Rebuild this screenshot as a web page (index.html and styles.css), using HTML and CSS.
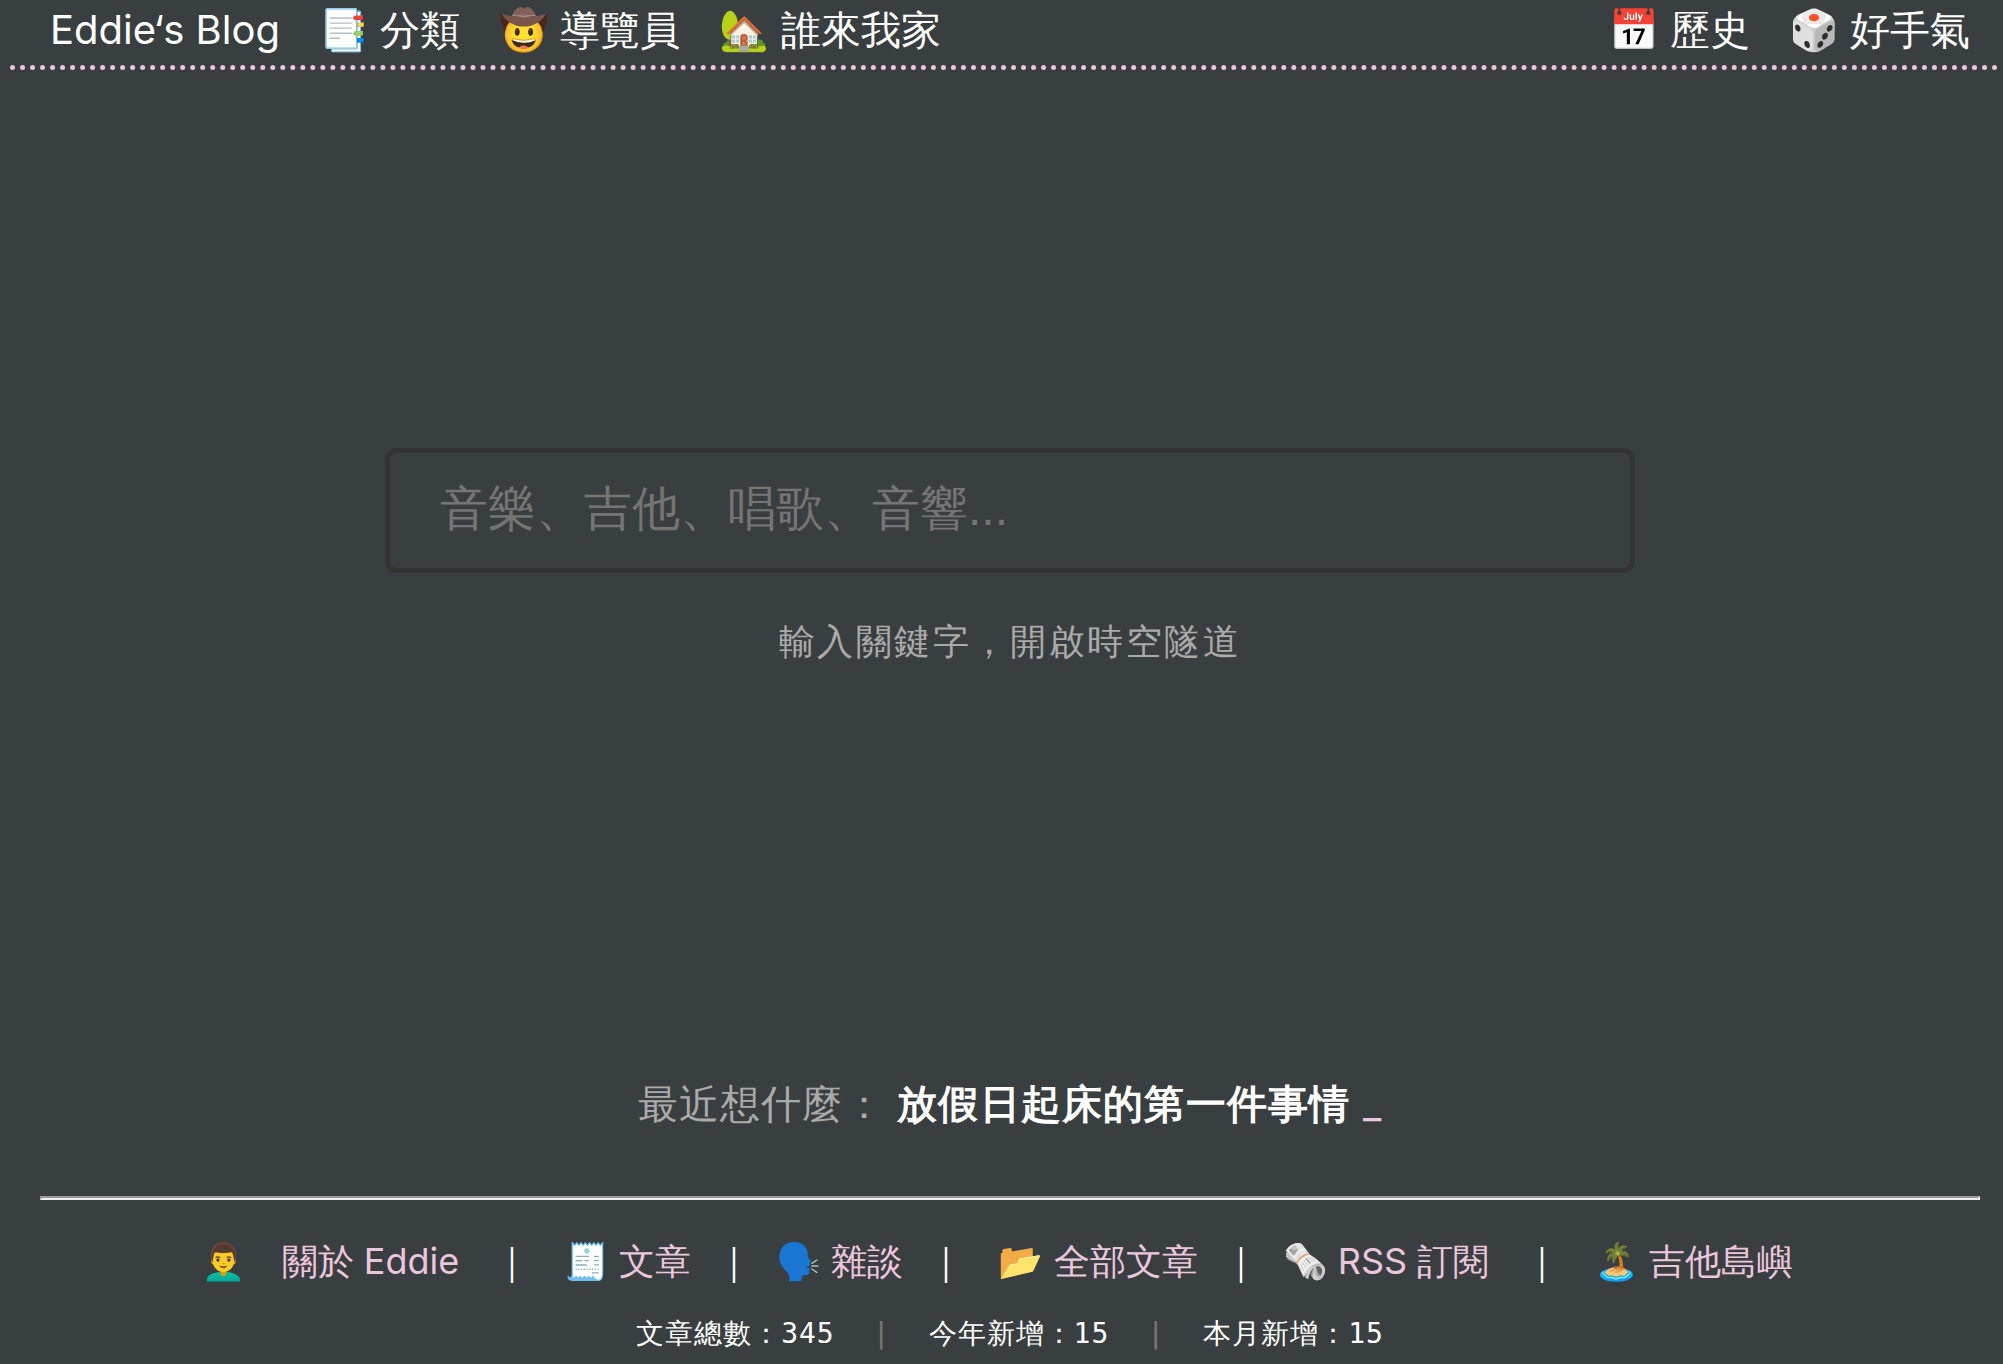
FILE: index.html
```html
<!DOCTYPE html>
<html lang="zh-Hant">
<head>
<meta charset="utf-8">
<title>Eddie‘s Blog</title>
<link rel="stylesheet" href="styles.css">
</head>
<body>
<header class="top">
  <nav class="nav">
    <a href="#">Eddie‘s Blog</a>
    <a href="#">📑 分類</a>
    <a href="#">🤠 導覽員</a>
    <a href="#">🏡 誰來我家</a>
  </nav>
  <nav class="nav">
    <a href="#">📅 歷史</a>
    <a href="#">🎲 好手氣</a>
  </nav>
</header>
<main class="main">
  <form class="search">
    <input class="search-box" id="q" type="search" placeholder="音樂、吉他、唱歌、音響...">
    <label class="hint" for="q">輸入關鍵字，開啟時空隧道</label>
  </form>
  <p class="recent">最近想什麼： <a href="#">放假日起床的第一件事情</a> <span class="cursor">_</span></p>
</main>
<footer class="footer">
  <hr class="rule">
  <nav class="links">
    <a href="#">👨‍🦱　關於 Eddie</a>
    <span class="bar-wide">｜</span>
    <a href="#">🧾 文章</a>
    <span>｜</span>
    <a href="#">🗣️ 雜談</a>
    <span class="bar-after">｜</span>
    <a href="#">📂 全部文章</a>
    <span>｜</span>
    <a href="#">🗞️ RSS 訂閱</a>
    <span class="bar-wide">｜</span>
    <a href="#">🏝️ 吉他島嶼</a>
  </nav>
  <p class="stats">
    <span>文章總數：345</span>
    <span class="stats-bar">|</span>
    <span>今年新增：15</span>
    <span class="stats-bar">|</span>
    <span>本月新增：15</span>
  </p>
</footer>
</body>
</html>
```

FILE: styles.css
```css
* {
  box-sizing: border-box;
}

body {
  margin: 0;
  min-height: 100vh;
  display: flex;
  flex-direction: column;
  background: #393e40;
  color: #fff;
  font-family: Inter, "Droid Sans Fallback", sans-serif;
}

a {
  color: inherit;
  text-decoration: none;
}

.top {
  margin: 0 4px 0 10px;
  padding: 0 29px 0 40px;
  height: 70px;
  display: flex;
  justify-content: space-between;
  border-bottom: 5px dotted #ecc6dc;
  font-size: 40px;
  line-height: 60px;
}

.nav {
  display: flex;
  gap: 39px;
}

.main {
  flex: 1;
  padding: 378px 23px 0 40px;
  display: flex;
  flex-direction: column;
  align-items: center;
}

.search {
  width: 100%;
  max-width: 1250px;
  display: flex;
  flex-direction: column;
  align-items: center;
}

.search-box {
  width: 100%;
  height: 125px;
  padding: 0 50px 4px;
  border: 5px solid #333;
  border-radius: 12px;
  background: none;
  color: #fff;
  font-family: "Liberation Sans", "Droid Sans Fallback", sans-serif;
  font-size: 48px;
}

.search-box::placeholder {
  color: #757575;
}

.hint {
  margin-top: 44px;
  color: #aaa;
  font-size: 36px;
  line-height: 48px;
  letter-spacing: 0.07em;
}

.recent {
  margin: auto 0 62px;
  color: #aaa;
  font-size: 40px;
  line-height: 60px;
  letter-spacing: 0.03em;
}

.recent a {
  color: #fff;
  font-weight: 700;
}

.cursor {
  color: #ecc6dc;
}

.footer {
  padding: 0 23px 0 40px;
}

.rule {
  margin: 0;
  border: 2px solid;
  border-color: #9a9a9a #eee #eee #9a9a9a;
}

.links {
  display: flex;
  justify-content: center;
  gap: 25px;
  margin-top: 37px;
  padding-right: 26px;
  font-size: 36px;
  line-height: 48px;
}

.links a {
  color: #ecc6dc;
}

.bar-wide {
  margin: 0 10px;
}

.bar-after {
  margin-right: 10px;
}

.stats {
  display: flex;
  justify-content: center;
  gap: 38px;
  margin: 29px 0 10px;
  font-family: "DejaVu Sans Mono", "Droid Sans Fallback", monospace;
  font-size: 28px;
  line-height: 40px;
  letter-spacing: 1px;
}

.stats-bar {
  color: #777;
}
```
